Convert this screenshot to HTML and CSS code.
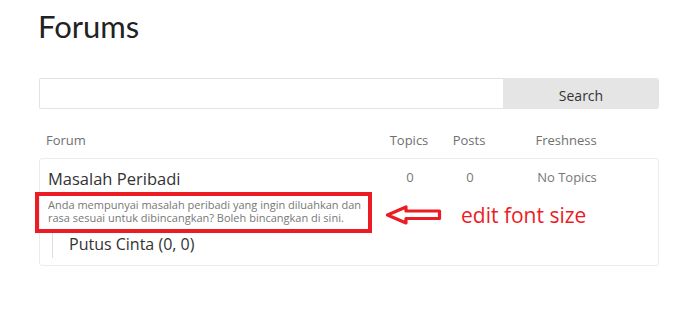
FILE: index.html
```html
<!DOCTYPE html>
<html lang="ms">
<head>
  <meta charset="UTF-8" />
  <meta name="viewport" content="width=device-width, initial-scale=1.0"/>
  <title>Forums</title>
  <link rel="stylesheet" href="styles.css">
</head>
<body>
  <div class="page">
    <h1>Forums</h1>

    <form class="search" onsubmit="return false">
      <input type="text" class="search-input">
      <button class="search-btn">Search</button>
    </form>

    <div class="forum-head">
      <div class="col-forum">Forum</div>
      <div class="col-num">Topics</div>
      <div class="col-num">Posts</div>
      <div class="col-fresh">Freshness</div>
    </div>

    <div class="forum-list">
      <div class="forum-row">
        <div class="col-forum">
          <a class="forum-title" href="#">Masalah Peribadi</a>
          <p class="forum-desc">Anda mempunyai masalah peribadi yang ingin diluahkan dan rasa sesuai untuk dibincangkan? Boleh bincangkan di sini.</p>
          <ul class="subforums">
            <li><a href="#">Putus Cinta (0, 0)</a></li>
          </ul>
        </div>
        <div class="col-num">0</div>
        <div class="col-num">0</div>
        <div class="col-fresh">No Topics</div>
      </div>

      <!-- annotation -->
      <div class="note-box"></div>
      <svg class="note-arrow" width="58" height="20" viewBox="0 0 58 20">
        <path d="M2.5 10 L21 2 L21 6 L54.5 6 L54.5 13.5 L21 13.5 L21 18 Z" fill="#fff" stroke="#ec1c24" stroke-width="3.2" stroke-linejoin="round"/>
      </svg>
      <div class="note-text">edit font size</div>
    </div>
  </div>
</body>
</html>
```

FILE: styles.css
```css
* { margin: 0; padding: 0; box-sizing: border-box; }

body {
  font-family: 'Open Sans', 'Noto Sans', sans-serif;
  background: #fff;
  color: #333;
}

a { color: inherit; text-decoration: none; }

.page {
  width: 620px;
  margin-left: 39px;
  padding-top: 6px;
}

h1 {
  font-family: 'Lato', sans-serif;
  font-weight: 400;
  font-size: 31px;
  line-height: 40px;
  color: #222;
  margin-left: -1px;
}

.search {
  display: flex;
  height: 31px;
  margin-top: 32px;
}

.search-input {
  flex: 1;
  border: 1px solid #e3e3e3;
  border-right: none;
  border-radius: 2px 0 0 2px;
  background: #fff;
}

.search-btn {
  width: 156px;
  border: none;
  background: #e5e5e5;
  border-radius: 0 3px 3px 0;
  font-family: 'Open Sans', sans-serif;
  font-size: 14px;
  color: #333;
  padding-top: 3px;
}

.forum-head,
.forum-row {
  display: grid;
  grid-template-columns: 333px 60px 60px 134px;
}

.forum-head {
  margin-top: 21px;
  padding-left: 7px;
  height: 28px;
  font-size: 13px;
  line-height: 20px;
  color: #707070;
}

.col-num, .col-fresh { text-align: center; }

.forum-list {
  position: relative;
  border: 1px solid #ececec;
  border-radius: 3px;
}

.forum-row {
  padding: 9px 0 7px 8px;
  grid-template-columns: 332px 60px 60px 134px;
}

.forum-row .col-num,
.forum-row .col-fresh {
  font-size: 13px;
  line-height: 20px;
  color: #777;
  margin-top: -1px;
}

.forum-title {
  display: block;
  font-size: 16.5px;
  line-height: 22px;
  color: #333;
}

.forum-desc {
  margin-top: 8px;
  font-size: 11px;
  line-height: 13px;
  color: #777;
  width: 318px;
}

.subforums {
  list-style: none;
  margin: 9px 0 0 4px;
  border-left: 1px solid #ddd;
  padding-left: 16px;
  height: 25px;
}

.subforums a {
  font-size: 16px;
  line-height: 22px;
  color: #333;
}

.note-box {
  position: absolute;
  left: -5px;
  top: 33px;
  width: 337px;
  height: 41px;
  border: 4px solid #ec1c24;
}

.note-arrow {
  position: absolute;
  left: 345px;
  top: 46px;
}

.note-text {
  position: absolute;
  left: 421px;
  top: 42px;
  font-size: 21px;
  line-height: 28px;
  color: #ec1c24;
}
```
